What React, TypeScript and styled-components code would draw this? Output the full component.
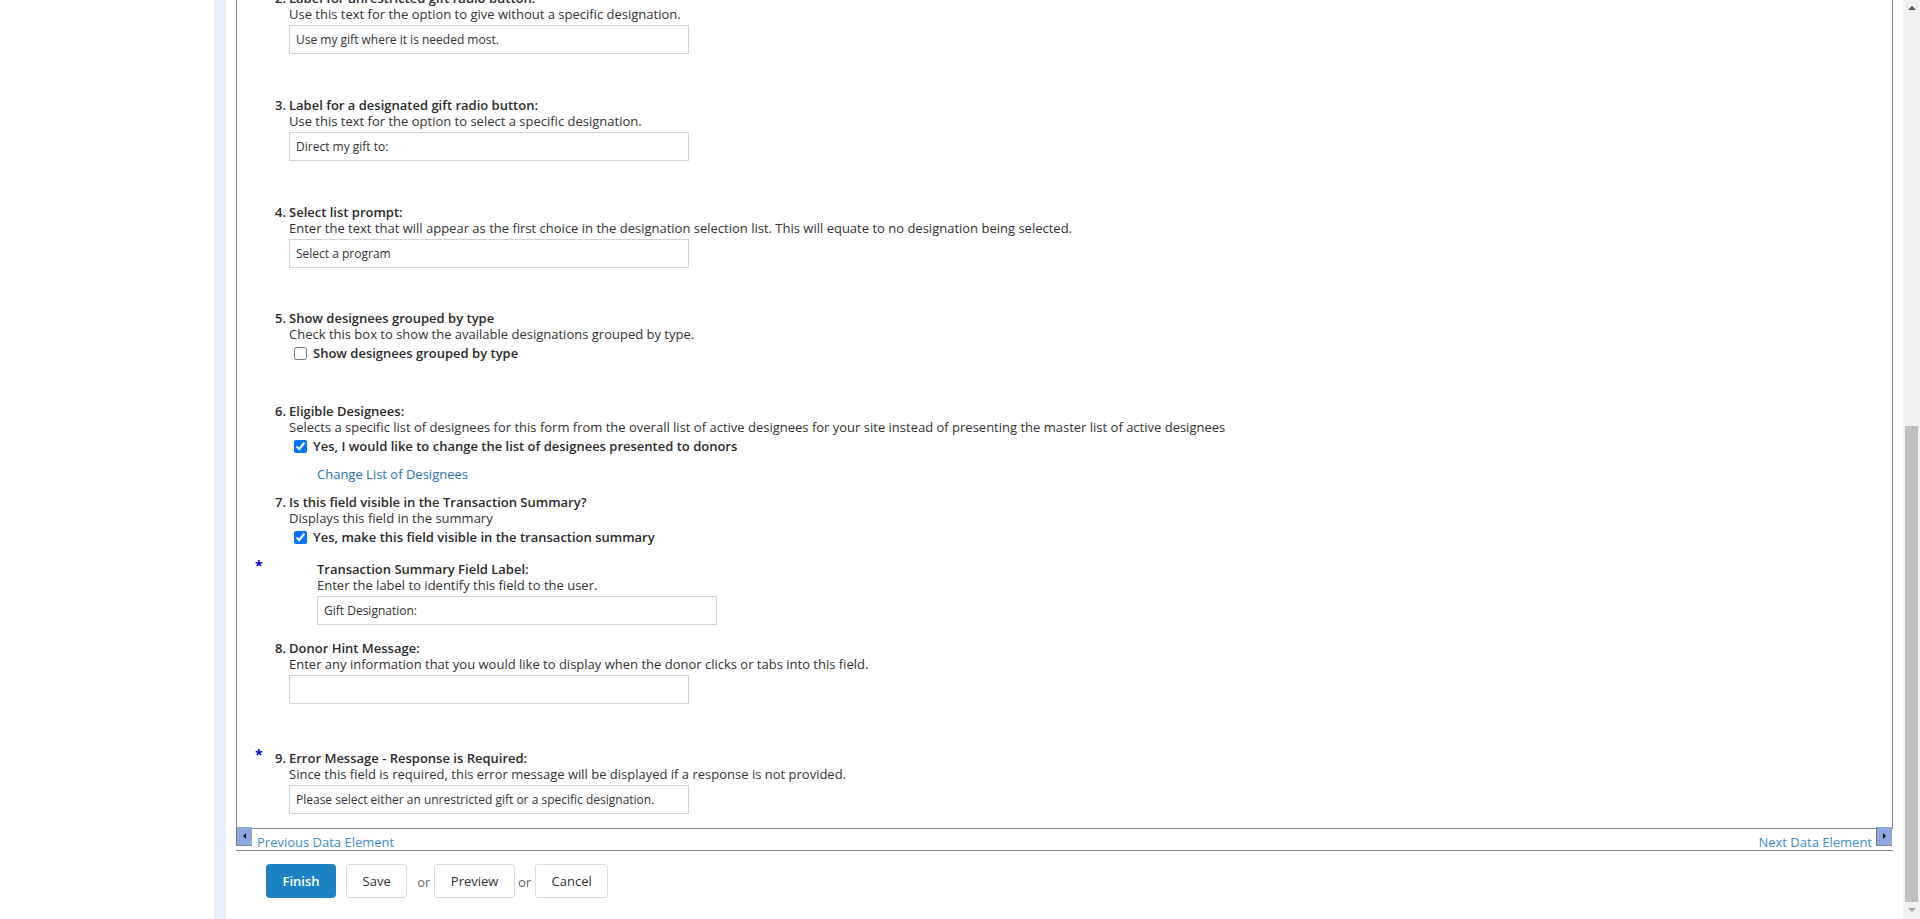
import React from "react";
import styled, { createGlobalStyle } from "styled-components";

const GlobalStyle = createGlobalStyle`
  html, body { margin: 0; padding: 0; background: #fff; overflow: hidden; }
  body {
    font-family: "Open Sans", "Liberation Sans", Arial, sans-serif;
    font-size: 13px;
    color: #333;
  }
  * { box-sizing: border-box; }
`;

const Page = styled.div`
  display: flex;
  width: 1920px;
  height: 919px;
  overflow: hidden;
  background: #fff;
`;

const LeftRail = styled.aside`
  flex: none;
  width: 226px;
  border-right: 12px solid #e8f1fb;
`;

const Main = styled.main`
  flex: 1;
  min-width: 0;
  padding: 0 10px;
  display: flex;
  flex-direction: column;
  overflow: hidden;
`;

const Panel = styled.section`
  margin-top: -10px;
  border-left: 1px solid #858585;
  border-right: 1px solid #858585;
  padding: 0 0 14px 16px;
`;

const Item = styled.div<{ $mt?: number }>`
  display: grid;
  grid-template-columns: 21px 15px 1fr;
  line-height: 16px;
  margin-top: ${(p) => p.$mt ?? 0}px;
`;

const Star = styled.span`
  grid-column: 1;
  grid-row: 1;
  color: #0000ff;
  font-size: 14px;
  font-weight: 700;
  padding-left: 2px;
  margin-top: -3px;
`;

const Num = styled.span`
  grid-column: 2;
  grid-row: 1;
  font-weight: 600;
  color: #2b2b2b;
  margin-left: 1px;
`;

const Label = styled.div<{ $indent?: number }>`
  grid-column: 3;
  grid-row: 1;
  font-weight: 600;
  color: #2b2b2b;
  padding-left: ${(p) => p.$indent ?? 0}px;
`;

const Desc = styled.div<{ $indent?: number }>`
  grid-column: 3;
  color: #333;
  padding-left: ${(p) => p.$indent ?? 0}px;
`;

const Field = styled.div<{ $indent?: number }>`
  grid-column: 3;
  margin-top: 3px;
  padding-left: ${(p) => p.$indent ?? 0}px;
`;

const TextInput = styled.input`
  display: block;
  width: 400px;
  height: 29px;
  border: 1px solid #d2d2d2;
  border-radius: 0;
  padding: 0 6px;
  font-family: "Open Sans", "Liberation Sans", Arial, sans-serif;
  font-size: 12px;
  color: #333;
  background: #fff;
  outline: none;
`;

const CheckRow = styled.label`
  grid-column: 3;
  display: flex;
  align-items: center;
  gap: 6px;
  height: 16px;
  margin-top: 3px;
  padding-left: 5px;
  font-weight: 600;
  color: #2b2b2b;
`;

const Check = styled.input`
  width: 13px;
  height: 13px;
  margin: 0;
  accent-color: #0075ff;
`;

const LinkRow = styled.a`
  grid-column: 3;
  margin-top: 12px;
  padding-left: 28px;
  color: #2574b8;
  text-decoration: none;
  line-height: 16px;
`;

const NavBar = styled.nav`
  display: flex;
  justify-content: space-between;
  align-items: flex-start;
  height: 23px;
  border-top: 1px solid #8c8c8c;
  border-bottom: 1px solid #8c8c8c;
`;

const NavGroup = styled.div`
  display: flex;
  align-items: flex-start;
`;

const ArrowBox = styled.span<{ $dir: "left" | "right" }>`
  display: flex;
  align-items: center;
  justify-content: center;
  width: 16px;
  height: 19px;
  margin-top: -2px;
  margin-right: ${(p) => (p.$dir === "right" ? 1 : 0)}px;
  background: #8da8e0;
  border-left: 1px solid #6f7a8c;
  border-bottom: 1px solid #7d8aa3;
  &::before {
    content: "";
    width: 0;
    height: 0;
    border-top: 3px solid transparent;
    border-bottom: 3px solid transparent;
    ${(p) =>
      p.$dir === "left"
        ? "border-right: 3px solid #111;"
        : "border-left: 3px solid #111;"}
  }
`;

const NavLink = styled.a<{ $side: "left" | "right" }>`
  color: #3a8ed8;
  text-decoration: none;
  line-height: 16px;
  padding-top: 5px;
  ${(p) => (p.$side === "left" ? "margin-left: 5px;" : "margin-right: 4px;")}
`;

const Actions = styled.div`
  display: flex;
  align-items: center;
  padding: 13px 0 0 30px;
`;

const PrimaryButton = styled.button`
  height: 34px;
  padding: 0 16.5px;
  margin-right: 10px;
  border: none;
  border-radius: 4px;
  background: #1d83c7;
  color: #fff;
  font-family: "Open Sans", "Liberation Sans", Arial, sans-serif;
  font-size: 13px;
  font-weight: 600;
`;

const SecondaryButton = styled.button<{ $mr?: number }>`
  height: 34px;
  padding: 0 15.5px;
  margin-right: ${(p) => p.$mr ?? 0}px;
  border: 1px solid #dcdcdc;
  border-radius: 3px;
  background: #fff;
  color: #333;
  font-family: "Open Sans", "Liberation Sans", Arial, sans-serif;
  font-size: 13px;
`;

const Or = styled.span`
  color: #666;
  margin-right: 4px;
  margin-top: 2px;
`;

const Scrollbar = styled.div`
  flex: none;
  width: 17px;
  height: 919px;
  background: #f1f1f1;
  display: flex;
  flex-direction: column;
`;

const ScrollArrow = styled.div<{ $dir: "up" | "down" }>`
  height: 17px;
  display: flex;
  justify-content: center;
  align-items: ${(p) => (p.$dir === "up" ? "flex-start" : "flex-end")};
  padding: ${(p) => (p.$dir === "up" ? "6px 0 0" : "0 0 7px")};
  &::before {
    content: "";
    width: 0;
    height: 0;
    border-left: 4px solid transparent;
    border-right: 4px solid transparent;
    ${(p) =>
      p.$dir === "up"
        ? "border-bottom: 4px solid #505050;"
        : "border-top: 4px solid #a3a3a3;"}
  }
`;

const Track = styled.div`
  flex: 1;
  display: flex;
  flex-direction: column;
  justify-content: flex-end;
  align-items: center;
`;

const Thumb = styled.div`
  width: 13px;
  height: 476px;
  background: #c1c1c1;
`;

export default function App() {
  return (
    <>
      <GlobalStyle />
      <Page>
        <LeftRail />
        <Main>
          <Panel>
            <Item>
              <Num>2.</Num>
              <Label>Label for unrestricted gift radio button:</Label>
              <Desc>Use this text for the option to give without a specific designation.</Desc>
              <Field>
                <TextInput readOnly value="Use my gift where it is needed most." />
              </Field>
            </Item>

            <Item $mt={43}>
              <Num>3.</Num>
              <Label>Label for a designated gift radio button:</Label>
              <Desc>Use this text for the option to select a specific designation.</Desc>
              <Field>
                <TextInput readOnly value="Direct my gift to:" />
              </Field>
            </Item>

            <Item $mt={43}>
              <Num>4.</Num>
              <Label>Select list prompt:</Label>
              <Desc>
                Enter the text that will appear as the first choice in the designation selection list. This will equate to no designation being selected.
              </Desc>
              <Field>
                <TextInput readOnly value="Select a program" />
              </Field>
            </Item>

            <Item $mt={42}>
              <Num>5.</Num>
              <Label>Show designees grouped by type</Label>
              <Desc>Check this box to show the available designations grouped by type.</Desc>
              <CheckRow>
                <Check type="checkbox" readOnly />
                Show designees grouped by type
              </CheckRow>
            </Item>

            <Item $mt={42}>
              <Num>6.</Num>
              <Label>Eligible Designees:</Label>
              <Desc>
                Selects a specific list of designees for this form from the overall list of active designees for your site instead of presenting the master list of active designees
              </Desc>
              <CheckRow>
                <Check type="checkbox" checked readOnly />
                Yes, I would like to change the list of designees presented to donors
              </CheckRow>
              <LinkRow href="#">Change List of Designees</LinkRow>
            </Item>

            <Item $mt={12}>
              <Num>7.</Num>
              <Label>Is this field visible in the Transaction Summary?</Label>
              <Desc>Displays this field in the summary</Desc>
              <CheckRow>
                <Check type="checkbox" checked readOnly />
                Yes, make this field visible in the transaction summary
              </CheckRow>
            </Item>

            <Item $mt={16}>
              <Star>*</Star>
              <Label $indent={28}>Transaction Summary Field Label:</Label>
              <Desc $indent={28}>Enter the label to identify this field to the user.</Desc>
              <Field $indent={28}>
                <TextInput readOnly value="Gift Designation:" />
              </Field>
            </Item>

            <Item $mt={15}>
              <Num>8.</Num>
              <Label>Donor Hint Message:</Label>
              <Desc>Enter any information that you would like to display when the donor clicks or tabs into this field.</Desc>
              <Field>
                <TextInput readOnly value="" />
              </Field>
            </Item>

            <Item $mt={46}>
              <Star>*</Star>
              <Num>9.</Num>
              <Label>Error Message - Response is Required:</Label>
              <Desc>Since this field is required, this error message will be displayed if a response is not provided.</Desc>
              <Field>
                <TextInput readOnly value="Please select either an unrestricted gift or a specific designation." />
              </Field>
            </Item>
          </Panel>

          <NavBar>
            <NavGroup>
              <ArrowBox $dir="left" />
              <NavLink $side="left" href="#">Previous Data Element</NavLink>
            </NavGroup>
            <NavGroup>
              <NavLink $side="right" href="#">Next Data Element</NavLink>
              <ArrowBox $dir="right" />
            </NavGroup>
          </NavBar>

          <Actions>
            <PrimaryButton type="button">Finish</PrimaryButton>
            <SecondaryButton type="button" $mr={10}>Save</SecondaryButton>
            <Or>or</Or>
            <SecondaryButton type="button" $mr={3}>Preview</SecondaryButton>
            <Or>or</Or>
            <SecondaryButton type="button">Cancel</SecondaryButton>
          </Actions>
        </Main>
        <Scrollbar>
          <ScrollArrow $dir="up" />
          <Track>
            <Thumb />
          </Track>
          <ScrollArrow $dir="down" />
        </Scrollbar>
      </Page>
    </>
  );
}
